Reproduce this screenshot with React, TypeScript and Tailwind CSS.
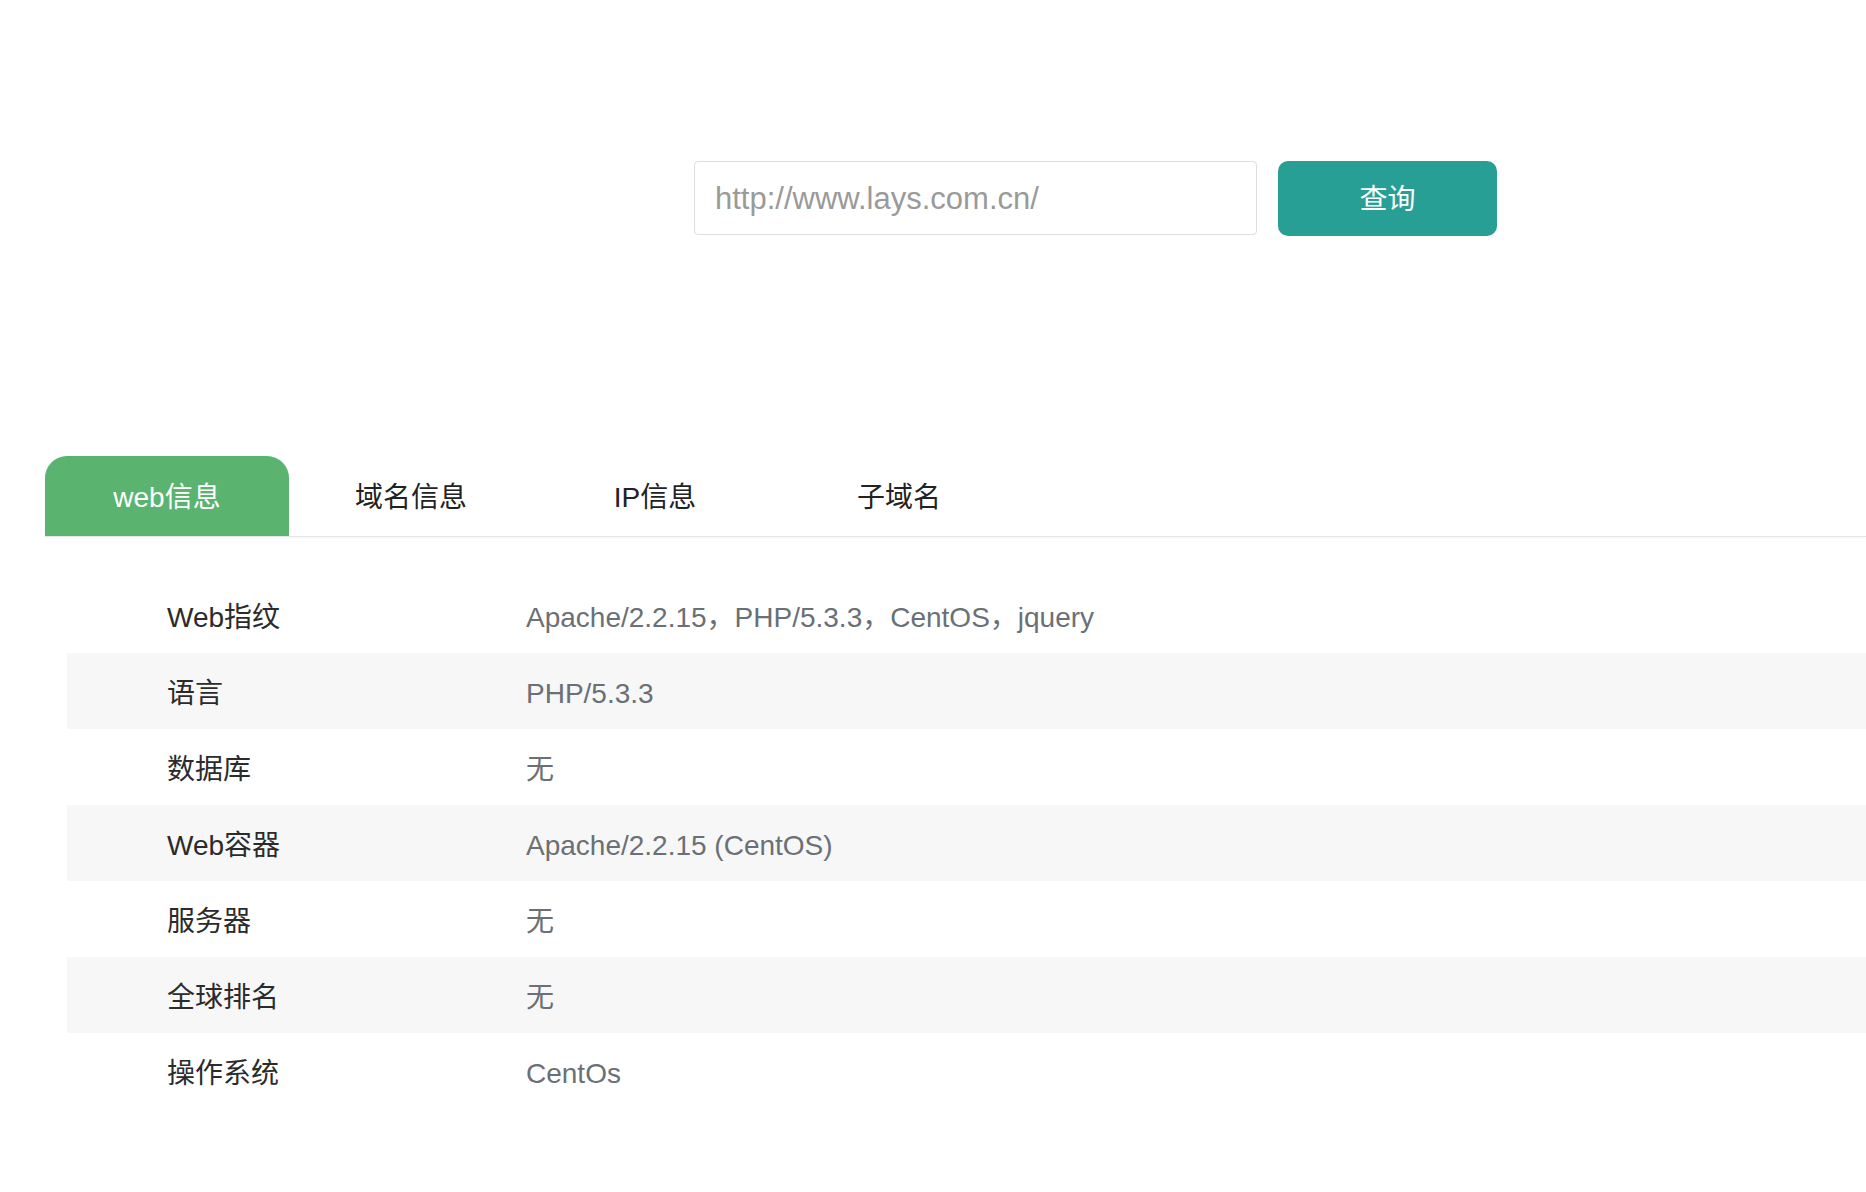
import { useState } from 'react';

const rows: [string, string][] = [
  ['Web指纹', 'Apache/2.2.15，PHP/5.3.3，CentOS，jquery'],
  ['语言', 'PHP/5.3.3'],
  ['数据库', '无'],
  ['Web容器', 'Apache/2.2.15 (CentOS)'],
  ['服务器', '无'],
  ['全球排名', '无'],
  ['操作系统', 'CentOs'],
];

const tabs = ['web信息', '域名信息', 'IP信息', '子域名'];

export default function App() {
  const [active, setActive] = useState(0);

  return (
    <div
      className="min-h-[1192px] w-full bg-white"
      style={{ fontFamily: '"Liberation Sans", "Noto Sans CJK SC", sans-serif' }}
    >
      {/* search */}
      <div className="flex pt-[161px] pl-[694px]">
        <input
          className="h-[74px] w-[563px] rounded-[4px] border border-[#dedede] bg-white px-[20px] pt-[2px] text-[31px] text-[#333] placeholder:text-[#9a9a9a] outline-none"
          placeholder="http://www.lays.com.cn/"
        />
        <button className="ml-[21px] h-[75px] w-[219px] rounded-[10px] bg-[#289f94] pt-[2px] text-[28px] text-white">
          查询
        </button>
      </div>

      {/* tabs */}
      <div className="mt-[220px] ml-[45px] flex border-b border-[#e4e4e4] shadow-[0_1px_2px_rgba(0,0,0,0.04)]">
        {tabs.map((t, i) => (
          <button
            key={t}
            onClick={() => setActive(i)}
            className={
              i === active
                ? 'flex h-[80px] w-[244px] items-center justify-center rounded-t-[22px] bg-[#5bb370] pt-[3px] text-[28px] text-white'
                : 'flex h-[80px] w-[244px] items-center justify-center pt-[3px] text-[28px] text-[#222]'
            }
          >
            {t}
          </button>
        ))}
      </div>

      {/* info table */}
      <div className="mt-[40px] ml-[67px]">
        {rows.map(([k, v], i) => (
          <div
            key={k}
            className={`flex h-[76px] items-center pt-[5px] ${i % 2 === 1 ? 'bg-[#f7f7f7]' : 'bg-white'}`}
          >
            <div className="w-[459px] pl-[100px] text-[28px] text-[#2b2b2b]">{k}</div>
            <div className="text-[28px] text-[#6a7076]">{v}</div>
          </div>
        ))}
      </div>
    </div>
  );
}
